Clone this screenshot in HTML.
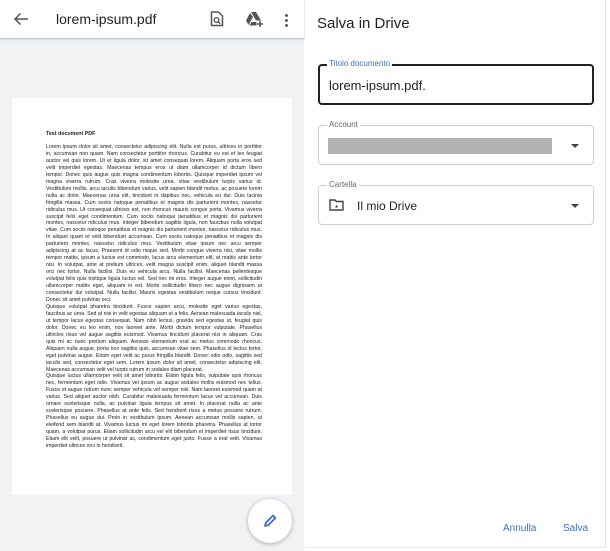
<!DOCTYPE html>
<html><head><meta charset="utf-8"><style>
*{margin:0;padding:0;box-sizing:border-box}
body{width:610px;height:551px;overflow:hidden;background:#fff;font-family:"Liberation Sans",Arial,sans-serif;position:relative}
#left{position:absolute;left:0;top:0;width:304px;height:551px;background:#f1f2f4}
#bar{position:absolute;left:0;top:0;width:304px;height:38px;background:#fff;box-shadow:0 1px 2px rgba(0,0,0,.25)}
#page{position:absolute;left:12px;top:98px;width:280px;height:397px;background:#fff}
.pdf{position:absolute;left:34px;width:216px;font-size:5.2px;line-height:6.95px;color:#1a1a1a;}
.pdf div{white-space:nowrap;overflow:hidden;text-align:justify;text-align-last:justify}
#fab{position:absolute;left:248px;top:499px;width:44px;height:44px;border-radius:50%;background:#fff;box-shadow:0 1px 4px rgba(0,0,0,.3)}
#right{position:absolute;left:305px;top:0;width:301px;height:548px;background:#fff;border-right:1px solid #e3e3e3;border-bottom:1px solid #e8e8e8}
.box{position:absolute;left:13px;width:276px;border:1px solid #cfcfcf;border-radius:4px}
.lab{position:absolute;left:8px;top:-6px;background:#fff;padding:0 2px;font-size:8px;color:#666}
.arr{position:absolute;right:14px;top:18px;width:0;height:0;border-left:4px solid transparent;border-right:4px solid transparent;border-top:4px solid #444}
</style></head><body>
<div id="left">
 <div id="bar">
  <svg style="position:absolute;left:13px;top:12px" width="16" height="14" viewBox="0 0 16 14"><path d="M15 7H2M7.5 1.5 2 7l5.5 5.5" stroke="#555" stroke-width="1.5" fill="none"/></svg>
  <div style="position:absolute;left:56px;top:11px;font-size:14px;color:#222">lorem-ipsum.pdf</div>
  <svg style="position:absolute;left:210px;top:11px" width="14" height="16" viewBox="0 0 14 16"><path d="M1.5 1h7l4 4v9.5h-11z" stroke="#555" stroke-width="1.5" fill="none" stroke-linejoin="round"/><circle cx="6.5" cy="9" r="2.3" stroke="#555" stroke-width="1.4" fill="none"/><path d="M8.2 10.7l2 2" stroke="#555" stroke-width="1.4"/></svg>
  <svg style="position:absolute;left:246px;top:12px" width="18" height="15" viewBox="0 0 18 15"><path d="M5 0h5l5 8.5h-5z M4 1 0 8.5 2.5 13 7 5z M3.5 13.5h7v-3.5h-5z" fill="#555"/><path d="M14 9v6M11 12h6" stroke="#555" stroke-width="1.6"/></svg>
  <div style="position:absolute;left:285px;top:13px;width:3px;height:14px;background:radial-gradient(circle,#555 1.3px,transparent 1.6px) 0 0/3px 5px repeat-y"></div>
 </div>
 <div id="page">
  <div class="pdf" style="top:33px;font-weight:bold;font-size:5.3px;color:#222">Test document PDF</div>
  <div class="pdf" style="top:46px">
<div>Lorem ipsum dolor sit amet, consectetur adipiscing elit. Nulla est purus, ultrices in porttitor</div>
<div>in, accumsan non quam. Nam consectetur porttitor rhoncus. Curabitur eu est et leo feugiat</div>
<div>auctor vel quis lorem. Ut et ligula dolor, sit amet consequat lorem. Aliquam porta eros sed</div>
<div>velit imperdiet egestas. Maecenas tempus eros ut diam ullamcorper id dictum libero</div>
<div>tempor. Donec quis augue quis magna condimentum lobortis. Quisque imperdiet ipsum vel</div>
<div>magna viverra rutrum. Cras viverra molestie urna, vitae vestibulum turpis varius id.</div>
<div>Vestibulum mollis, arcu iaculis bibendum varius, velit sapien blandit metus, ac posuere lorem</div>
<div>nulla ac dolor. Maecenas urna elit, tincidunt in dapibus nec, vehicula eu dui. Duis lacinia</div>
<div>fringilla massa. Cum sociis natoque penatibus et magnis dis parturient montes, nascetur</div>
<div>ridiculus mus. Ut consequat ultrices est, non rhoncus mauris congue porta. Vivamus viverra</div>
<div>suscipit felis eget condimentum. Cum sociis natoque penatibus et magnis dis parturient</div>
<div>montes, nascetur ridiculus mus. Integer bibendum sagittis ligula, non faucibus nulla volutpat</div>
<div>vitae. Cum sociis natoque penatibus et magnis dis parturient montes, nascetur ridiculus mus.</div>
<div>In aliquet quam et velit bibendum accumsan. Cum sociis natoque penatibus et magnis dis</div>
<div>parturient montes, nascetur ridiculus mus. Vestibulum vitae ipsum nec arcu semper</div>
<div>adipiscing at ac lacus. Praesent id odio risque sed. Morbi congue viverra nisi, vitae mollis</div>
<div>tempor mattis, ipsum a luctus est commodo, lacus arcu elementum elit, at mattis ante tortor</div>
<div>nisi. In volutpat, ante at pretium ultrices, velit magna suscipit enim, aliquet blandit massa</div>
<div>orci nec tortor. Nulla facilisi. Duis eu vehicula arcu. Nulla facilisi. Maecenas pellentesque</div>
<div>volutpat felis quis tristique ligula luctus vel. Sed nec mi eros. Integer augue enim, sollicitudin</div>
<div>ullamcorper mattis eget, aliquam in est. Morbi sollicitudin libero nec augue dignissim ut</div>
<div>consectetur dui volutpat. Nulla facilisi. Mauris egestas vestibulum neque cursus tincidunt.</div>
<div style="text-align-last:left">Donec sit amet pulvinar orci.</div>
<div>Quisque volutpat pharetra tincidunt. Fusce sapien arcu, molestie eget varius egestas,</div>
<div>faucibus ac urna. Sed at nisi in velit egestas aliquam ut a felis. Aenean malesuada iaculis nisl,</div>
<div>ut tempor lacus egestas consequat. Nam nibh lectus, gravida sed egestas ut, feugiat quis</div>
<div>dolor. Donec eu leo enim, non laoreet ante. Morbi dictum tempor vulputate. Phasellus</div>
<div>ultricies risus vel augue sagittis euismod. Vivamus tincidunt placerat nisi in aliquam. Cras</div>
<div>quis mi ac nunc pretium aliquam. Aenean elementum erat ac metus commodo rhoncus.</div>
<div>Aliquam nulla augue, porta non sagittis quis, accumsan vitae sem. Phasellus id lectus tortor,</div>
<div>eget pulvinar augue. Etiam eget velit ac purus fringilla blandit. Donec odio odio, sagittis sed</div>
<div>iaculis sed, consectetur eget sem. Lorem ipsum dolor sit amet, consectetur adipiscing elit.</div>
<div style="text-align-last:left">Maecenas accumsan velit vel turpis rutrum in sodales diam placerat.</div>
<div>Quisque luctus ullamcorper velit sit amet lobortis. Etiam ligula felis, vulputate quis rhoncus</div>
<div>nec, fermentum eget odio. Vivamus vel ipsum ac augue sodales mollis euismod nec tellus.</div>
<div>Fusce et augue rutrum nunc semper vehicula vel semper nisl. Nam laoreet euismod quam at</div>
<div>varius. Sed aliquet auctor nibh. Curabitur malesuada fermentum lacus vel accumsan. Duis</div>
<div>ornare scelerisque nulla, ac pulvinar ligula tempus sit amet. In placerat nulla ac ante</div>
<div>scelerisque posuere. Phasellus at ante felis. Sed hendrerit risus a metus posuere rutrum.</div>
<div>Phasellus eu augue dui. Proin in vestibulum ipsum. Aenean accumsan mollis sapien, ut</div>
<div>eleifend sem blandit at. Vivamus luctus mi eget lorem lobortis pharetra. Phasellus at tortor</div>
<div>quam, a volutpat purus. Etiam sollicitudin arcu vel elit bibendum et imperdiet risus tincidunt.</div>
<div>Etiam elit velit, posuere ut pulvinar ac, condimentum eget justo. Fusce a erat velit. Vivamus</div>
<div style="text-align-last:left">imperdiet ultrices orci in hendrerit.</div>
  </div>
 </div>
 <div id="fab"><svg style="position:absolute;left:14px;top:14px" width="16" height="16" viewBox="0 0 16 16"><path d="M3 13l.8-3.2L11 2.6l2.4 2.4-7.2 7.2z" stroke="#3b6fc4" stroke-width="1.8" fill="none" stroke-linejoin="round"/></svg></div>
</div>
<div id="right">
 <div style="position:absolute;left:12px;top:15px;font-size:15px;color:#222">Salva in Drive</div>
 <div class="box" style="top:64px;height:41px;border:2px solid #222">
  <div class="lab" style="left:7px;top:-7px;color:#3b6fc4">Titolo documento</div>
  <div style="position:absolute;left:9px;top:12px;font-size:13px;color:#222">lorem-ipsum.pdf.</div>
 </div>
 <div class="box" style="top:125px;height:40px">
  <div class="lab">Account</div>
  <div style="position:absolute;left:9px;top:12px;width:224px;height:16px;background:#b3b3b3"></div>
  <div class="arr"></div>
 </div>
 <div class="box" style="top:185px;height:40px">
  <div class="lab">Cartella</div>
  <svg style="position:absolute;left:10px;top:13px" width="15" height="12" viewBox="0 0 15 12"><path d="M1 1h5l1.3 1.5H14V11H1z" stroke="#444" stroke-width="1.4" fill="none"/><path d="M6 8.5l1.5-2.8L9 8.5z" fill="#444"/></svg>
  <div style="position:absolute;left:38px;top:13px;font-size:12px;color:#222">Il mio Drive</div>
  <div class="arr"></div>
 </div>
 <div style="position:absolute;left:198px;top:523px;font-size:10px;color:#3b6fc4">Annulla</div>
 <div style="position:absolute;left:258px;top:523px;font-size:10px;color:#3b6fc4">Salva</div>
</div>
</body></html>
